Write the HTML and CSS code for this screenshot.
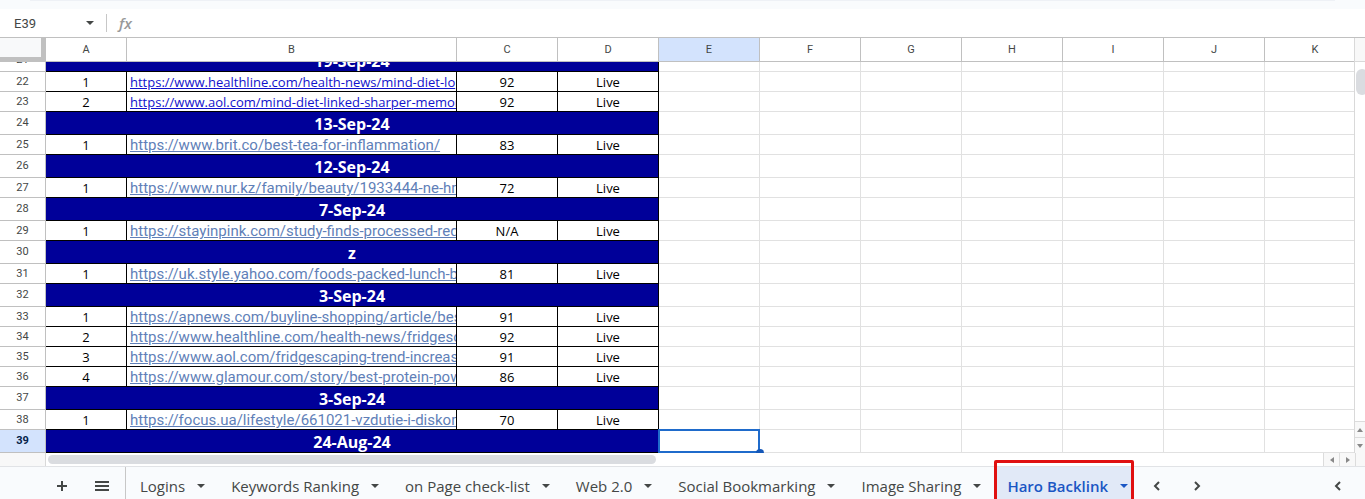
FILE: index.html
```html
<!DOCTYPE html>
<html lang="en">

<head>
    <meta charset="UTF-8">
    <meta name="viewport" content="width=device-width, initial-scale=1.0">
    <title>Haro Backlink</title>
    <link rel="stylesheet" href="styles.css">
</head>

<body>
    <div class="toolbar-edge"></div>

    <div class="formula-bar">
        <input class="name-box" type="text" value="E39" aria-label="Name box">
        <button class="name-arrow" type="button" aria-label="Named ranges"><span class="caret"></span></button>
        <label class="fx" for="formula">fx</label>
        <input class="formula" type="text" id="formula">
    </div>

    <div class="sheet">
        <div class="grid">
            <table class="cells head">
                <colgroup>
                    <col class="col-num"><col class="col-a"><col class="col-b">
                    <col><col><col><col><col><col><col><col><col>
                </colgroup>
                <thead>
                    <tr>
                        <th class="corner"></th>
                        <th>A</th>
                        <th>B</th>
                        <th>C</th>
                        <th>D</th>
                        <th class="selected">E</th>
                        <th>F</th>
                        <th>G</th>
                        <th>H</th>
                        <th>I</th>
                        <th>J</th>
                        <th>K</th>
                    </tr>
                </thead>
            </table>
            <div class="rows">
                <table class="cells">
                    <colgroup>
                        <col class="col-num"><col class="col-a"><col class="col-b">
                        <col><col><col><col><col><col><col><col><col>
                    </colgroup>
                    <tbody id="rows"></tbody>
                </table>
            </div>
        </div>
        <div class="v-scroll">
            <div class="v-head"></div>
            <div class="v-track"><div class="v-thumb"></div></div>
            <button class="scroll-btn" type="button" aria-label="Scroll up"><svg width="6" height="4"><path d="M0 4L3 0L6 4Z" /></svg></button>
            <button class="scroll-btn" type="button" aria-label="Scroll down"><svg width="6" height="4"><path d="M0 0L3 4L6 0Z" /></svg></button>
        </div>
    </div>

    <div class="h-scroll">
        <div class="h-corner"></div>
        <div class="h-track"><div class="h-thumb"></div></div>
        <button class="scroll-btn" type="button" aria-label="Scroll left"><svg width="4" height="6"><path d="M4 0L0 3L4 6Z" /></svg></button>
        <button class="scroll-btn" type="button" aria-label="Scroll right"><svg width="4" height="6"><path d="M0 0L4 3L0 6Z" /></svg></button>
        <div class="h-end"></div>
    </div>

    <div class="tab-bar">
        <button class="icon-btn" type="button" aria-label="Add sheet">
            <svg width="12" height="12"><path d="M6 1V11M1 6H11" /></svg>
        </button>
        <button class="icon-btn" type="button" aria-label="All sheets">
            <svg width="14" height="12"><path d="M0 2H14M0 6H14M0 10H14" /></svg>
        </button>
        <div class="tabs">
            <button class="tab" type="button">Logins<span class="caret"></span></button>
            <button class="tab" type="button">Keywords Ranking<span class="caret"></span></button>
            <button class="tab" type="button">on Page check-list<span class="caret"></span></button>
            <button class="tab" type="button">Web 2.0<span class="caret"></span></button>
            <button class="tab" type="button">Social Bookmarking<span class="caret"></span></button>
            <button class="tab" type="button">Image Sharing<span class="caret"></span></button>
            <button class="tab active" type="button">Haro Backlink<span class="caret"></span></button>
        </div>
        <button class="icon-btn" type="button" aria-label="Previous tabs">
            <svg width="8" height="12"><path d="M6 2L2 6L6 10" /></svg>
        </button>
        <button class="icon-btn" type="button" aria-label="Next tabs">
            <svg width="8" height="12"><path d="M2 2L6 6L2 10" /></svg>
        </button>
        <button class="icon-btn side-toggle" type="button" aria-label="Show side panel">
            <svg width="8" height="12"><path d="M6 2L2 6L6 10" /></svg>
        </button>
    </div>

    <script>
        // a row is either a date heading or [no, url, da, status]
        var firstRow = 21;
        var data = [
            '19-Sep-24',
            [1, 'https://www.healthline.com/health-news/mind-diet-lo', '92', 'Live', 'blue'],
            [2, 'https://www.aol.com/mind-diet-linked-sharper-memor', '92', 'Live', 'blue'],
            '13-Sep-24',
            [1, 'https://www.brit.co/best-tea-for-inflammation/', '83', 'Live'],
            '12-Sep-24',
            [1, 'https://www.nur.kz/family/beauty/1933444-ne-hm', '72', 'Live'],
            '7-Sep-24',
            [1, 'https://stayinpink.com/study-finds-processed-red-', 'N/A', 'Live'],
            'z',
            [1, 'https://uk.style.yahoo.com/foods-packed-lunch-ba', '81', 'Live'],
            '3-Sep-24',
            [1, 'https://apnews.com/buyline-shopping/article/best', '91', 'Live'],
            [2, 'https://www.healthline.com/health-news/fridgesca', '92', 'Live'],
            [3, 'https://www.aol.com/fridgescaping-trend-increase', '91', 'Live'],
            [4, 'https://www.glamour.com/story/best-protein-powd', '86', 'Live'],
            '3-Sep-24',
            [1, 'https://focus.ua/lifestyle/661021-vzdutie-i-diskom', '70', 'Live'],
            '24-Aug-24'
        ];

        var html = '';
        data.forEach((row, index) => {
            var num = firstRow + index;
            var selected = num === 39;
            var isDate = typeof row === 'string';

            html += `<tr class="${isDate ? 'date-row' : 'link-row'}">
                <th class="${selected ? 'selected' : ''}">${num}</th>`;
            if (isDate) {
                html += `<td class="date" colspan="4">${row}</td>`;
            } else {
                html += `<td class="filled">${row[0]}</td>
                    <td class="filled url ${row[4] || ''}"><a href="${row[1]}">${row[1]}</a></td>
                    <td class="filled">${row[2]}</td>
                    <td class="filled">${row[3]}</td>`;
            }
            html += selected ? '<td><div class="cursor"></div></td>' : '<td></td>';
            html += '<td></td>'.repeat(6) + '</tr>';
        });
        document.getElementById('rows').innerHTML = html;
    </script>
</body>

</html>
```

FILE: styles.css
```css
* {
    box-sizing: border-box;
}

body {
    margin: 0;
    height: 100vh;
    display: flex;
    flex-direction: column;
    overflow: hidden;
    background: #fff;
    color: #000;
    font-family: Roboto, Arial, sans-serif;
}

button,
input {
    border: none;
    padding: 0;
    background: none;
    font: inherit;
    color: inherit;
}

.caret {
    width: 0;
    border: 4px solid transparent;
    border-top-color: currentColor;
    border-bottom: none;
}

/* formula bar */
.toolbar-edge {
    flex: none;
    height: 9px;
    background: #f9fbfd;
}

.toolbar-edge::before {
    content: "";
    display: block;
    height: 1px;
    margin: 0 30px;
    background: #eef1f6;
}

.formula-bar {
    flex: none;
    display: flex;
    align-items: center;
    height: 28px;
    color: #444746;
}

.name-box {
    width: 80px;
    padding-left: 14px;
    font-size: 13px;
}

.name-arrow {
    display: flex;
    justify-content: center;
    width: 20px;
}

.fx {
    margin-left: 6px;
    padding-left: 12px;
    border-left: 1px solid #c7c7c7;
    font: italic 600 15px/18px "Open Sans", sans-serif;
    color: #999;
}

.formula {
    flex: 1;
    margin-left: 12px;
    font-size: 13px;
}

/* grid */
.sheet {
    flex: 1;
    display: flex;
    min-height: 0;
    border-top: 1px solid #c0c0c0;
}

.grid {
    flex: 1;
    min-width: 0;
    display: flex;
    flex-direction: column;
    overflow: hidden;
    border-right: 1px solid #d9d9d9;
}

.rows {
    flex: 1;
    min-height: 0;
    display: flex;
    flex-direction: column;
    justify-content: flex-end;
    overflow: hidden;
}

.cells {
    flex: none;
    width: 1366px;
    table-layout: fixed;
    border-collapse: separate;
    border-spacing: 0;
}

.col-num {
    width: 46px;
}

.col-a {
    width: 81px;
}

.col-b {
    width: 330px;
}

.cells th,
.cells td {
    padding: 0;
    border-right: 1px solid #e1e1e1;
    border-bottom: 1px solid #e1e1e1;
    text-align: center;
    white-space: nowrap;
}

.cells th {
    border-color: #c0c0c0;
    font-size: 11px;
    line-height: 12px;
    font-weight: 400;
    color: #444746;
}

.cells th.selected {
    background: #d3e3fd;
}

.rows th.selected {
    font-weight: 700;
    color: #041e49;
}

.head th {
    height: 24px;
}

.head .corner {
    background: #f8f9fa;
    border-right: 5px solid #c0c0c0;
    border-bottom: 5px solid #c0c0c0;
}

.date-row {
    height: 23px;
}

.link-row {
    height: 20px;
}

.cells .date {
    padding-top: 2px;
    background: #000099;
    border-color: #000;
    color: #fff;
    font: bold 16px/20px "Open Sans", sans-serif;
}

.cells .filled {
    padding-top: 2px;
    border-color: #000;
    font: 13px/17px "Open Sans", sans-serif;
}

.cells .url {
    padding-left: 3px;
    overflow: hidden;
    text-align: left;
    font: 15px/17px Roboto, sans-serif;
}

.url a {
    color: #5f7fb8;
}

.cells .blue {
    font: 13px/17px "Open Sans", sans-serif;
}

.blue a {
    color: #1111cc;
}

.cursor {
    position: relative;
    height: 24px;
    margin: -1px;
    border: 2px solid #1f6bcb;
}

.cursor::after {
    content: "";
    position: absolute;
    right: -6px;
    bottom: -6px;
    width: 8px;
    height: 8px;
    border-radius: 50%;
    background: #1558b8;
}

/* scrollbars */
.scroll-btn {
    flex: none;
    display: flex;
    align-items: center;
    justify-content: center;
    border: 1px solid #dcdcdc;
    background: #f8f8f8;
}

.scroll-btn svg {
    fill: #888;
}

.v-scroll {
    flex: none;
    width: 10px;
    display: flex;
    flex-direction: column;
    overflow: hidden;
}

.v-head {
    height: 24px;
    background: #f8f8f8;
    border-bottom: 1px solid #d9d9d9;
}

.v-track {
    flex: 1;
    padding: 7px 0 0 1px;
}

.v-thumb {
    width: 12px;
    height: 26px;
    border-radius: 6px;
    background: #dadce0;
}

.v-scroll .scroll-btn {
    height: 16px;
    width: 11px;
    border-bottom: none;
    border-left: none;
}

.h-scroll {
    flex: none;
    display: flex;
    height: 13px;
}

.h-corner {
    width: 46px;
    background: #f8f8f8;
    border-right: 1px solid #d9d9d9;
}

.h-track {
    flex: 1;
    padding: 2px 8px 2px 2px;
}

.h-thumb {
    width: 48%;
    height: 9px;
    border-radius: 5px;
    background: #dadce0;
}

.h-scroll .scroll-btn {
    width: 16px;
    border-top: none;
    border-right: none;
    border-bottom: none;
}

.h-end {
    width: 10px;
    background: #f8f8f8;
    border-left: 1px solid #dcdcdc;
}

/* sheet tabs */
.tab-bar {
    flex: none;
    display: flex;
    align-items: center;
    height: 33px;
    padding: 0 7px 0 42px;
    border-top: 1px solid #e1e3e6;
    background: #f9fbfd;
    color: #444746;
}

.icon-btn {
    display: flex;
    align-items: center;
    justify-content: center;
    width: 40px;
    height: 32px;
}

.icon-btn svg {
    margin-top: 6px;
    fill: none;
    stroke: #444746;
    stroke-width: 2;
}

.side-toggle {
    margin-left: auto;
}

.tabs {
    display: flex;
    align-items: center;
    gap: 10px;
    margin: 0 3px;
    padding-left: 3px;
    border: solid #c7c7c7;
    border-width: 0 1px;
}

.tab {
    position: relative;
    display: flex;
    align-items: center;
    gap: 12px;
    height: 32px;
    padding: 5px 5px 0 11px;
    font: 500 15px/20px "Open Sans", sans-serif;
    white-space: nowrap;
}

.tab.active {
    background: #e1e9f7;
    color: #1a56c4;
    font-weight: 600;
}

/* red frame round the open tab */
.tab.active::after {
    content: "";
    position: absolute;
    inset: -7px -1px -4px -2px;
    border: 3px solid #e01010;
    border-radius: 2px;
}
```
